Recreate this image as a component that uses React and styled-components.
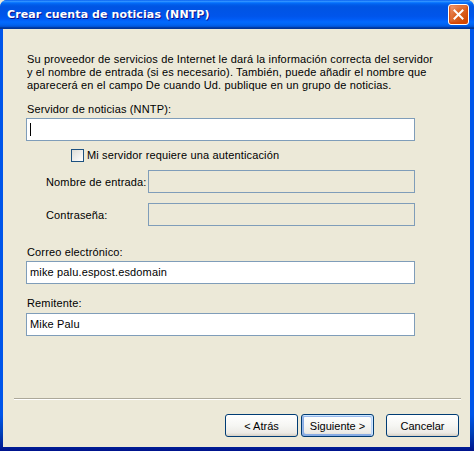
import styled, { createGlobalStyle } from "styled-components";

const GlobalStyle = createGlobalStyle`
  html, body {
    margin: 0;
    padding: 0;
    background: #ece9d8;
  }
  * {
    box-sizing: border-box;
  }
`;

export default () => {
  return (
    <>
      <GlobalStyle />
      <Window>
        <TitleBar>
          <Title>Crear cuenta de noticias (NNTP)</Title>
          <CloseBtn aria-label="Cerrar">
            <svg width="11" height="11" viewBox="0 0 11 11">
              <path
                d="M1.5 1.5 L9.5 9.5 M9.5 1.5 L1.5 9.5"
                stroke="#fff"
                strokeWidth="2"
                strokeLinecap="square"
              />
            </svg>
          </CloseBtn>
        </TitleBar>
        <Client>
          <Intro>
            Su proveedor de servicios de Internet le dará la información correcta del servidor
            <br />
            y el nombre de entrada (si es necesario). También, puede añadir el nombre que
            <br />
            aparecerá en el campo De cuando Ud. publique en un grupo de noticias.
          </Intro>

          <Label $top={11}>Servidor de noticias (NNTP):</Label>
          <Field $top={2}>
            <Caret />
          </Field>

          <CheckRow>
            <CheckBox />
            <span>Mi servidor requiere una autenticación</span>
          </CheckRow>

          <SubRow $top={8}>
            <SubLabel>Nombre de entrada:</SubLabel>
            <Field $disabled $width={267} />
          </SubRow>
          <SubRow $top={10}>
            <SubLabel>Contraseña:</SubLabel>
            <Field $disabled $width={267} />
          </SubRow>

          <Label $top={20}>Correo electrónico:</Label>
          <Field $top={2}>mike palu.espost.esdomain</Field>

          <Label $top={13}>Remitente:</Label>
          <Field $top={3}>Mike Palu</Field>

          <Separator />

          <Buttons>
            <Button>&lt; Atrás</Button>
            <Button $default>Siguiente &gt;</Button>
            <Button $gap>Cancelar</Button>
          </Buttons>
        </Client>
      </Window>
    </>
  );
};

const Window = styled.div`
  width: 474px;
  height: 451px;
  display: flex;
  flex-direction: column;
  background: linear-gradient(to bottom, #0055ea 0%, #0055ea 92%, #0040b8 96%, #00138c 100%);
  border-radius: 7px 7px 0 0;
  overflow: hidden;
  padding: 0 4px 4px 3px;
  font-family: Tahoma, "Liberation Sans", Arial, sans-serif;
  font-size: 11px;
  letter-spacing: 0.15px;
  color: #000;
`;

const TitleBar = styled.div`
  height: 29px;
  margin: 0 -4px 0 -3px;
  padding: 0 5px 0 7px;
  display: flex;
  align-items: center;
  justify-content: space-between;
  background: linear-gradient(
    to bottom,
    #0058ee 0%,
    #3593ff 4%,
    #288eff 6%,
    #127dff 8%,
    #036ffc 10%,
    #0262ee 14%,
    #0057e5 20%,
    #0054e3 24%,
    #0055eb 56%,
    #005bf5 66%,
    #026afe 76%,
    #0062ef 86%,
    #0052d6 92%,
    #0040ab 94%,
    #003092 100%
  );
`;

const Title = styled.div`
  color: #fff;
  font-family: "Trebuchet MS", "DejaVu Sans", sans-serif;
  font-weight: bold;
  font-size: 11px;
  text-shadow: 1px 1px #0f1089;
  letter-spacing: 0.1px;
`;

const CloseBtn = styled.div`
  width: 21px;
  height: 21px;
  border: 1px solid #fff;
  border-radius: 3px;
  display: flex;
  align-items: center;
  justify-content: center;
  background: radial-gradient(circle at 90% 90%, #cc4600 0%, #dc6527 55%, #f3a98b 100%);
  box-shadow: inset 0 -1px 2px 1px #da4600;
`;

const Client = styled.div`
  flex: 1;
  background: #ece9d8;
  padding: 24px 11px 0 23px;
  display: flex;
  flex-direction: column;
`;

const Intro = styled.p`
  margin: 0 0 0 1px;
  line-height: 13px;
  white-space: nowrap;
`;

const Label = styled.div`
  margin-top: ${(p) => p.$top || 0}px;
  padding-left: 1px;
  line-height: 13px;
`;

const Field = styled.div`
  margin-top: ${(p) => p.$top || 0}px;
  width: ${(p) => p.$width || 389}px;
  height: 23px;
  border: 1px solid #7f9db9;
  background: ${(p) => (p.$disabled ? "#ece9d8" : "#fff")};
  display: flex;
  align-items: center;
  padding-left: 3px;
  line-height: 13px;
`;

const Caret = styled.span`
  display: block;
  width: 1px;
  height: 13px;
  background: #000;
  margin-left: 0;
`;

const CheckRow = styled.label`
  margin: 8px 0 0 45px;
  display: flex;
  align-items: center;
  gap: 3px;
  line-height: 13px;
`;

const CheckBox = styled.span`
  width: 13px;
  height: 13px;
  border: 1px solid #1c5180;
  background: linear-gradient(135deg, #dcdcd7 0%, #ffffff 100%);
`;

const SubRow = styled.div`
  margin-top: ${(p) => p.$top}px;
  display: flex;
  align-items: center;
`;

const SubLabel = styled.span`
  width: 122px;
  padding-left: 20px;
`;

const Separator = styled.div`
  margin: 62px 0 0 -12px;
  width: 447px;
  height: 2px;
  border-top: 1px solid #aca899;
  border-bottom: 1px solid #fff;
`;

const Buttons = styled.div`
  margin-top: 14px;
  display: flex;
  justify-content: flex-end;
  gap: 3px;
`;

const Button = styled.button`
  width: 73px;
  height: 23px;
  margin-left: ${(p) => (p.$gap ? "9px" : "0")};
  font: inherit;
  color: #000;
  border: 1px solid #003c74;
  border-radius: 3px;
  background: linear-gradient(to bottom, #ffffff 0%, #f6f6f3 50%, #ecebe6 85%, #d6d0c5 100%);
  box-shadow: ${(p) =>
    p.$default
      ? "inset -1px 1px #cee7ff, inset 1px 2px #98b8ea, inset -2px 2px #bcd4f6, inset 1px -1px #89ade4, inset 2px -2px #89ade4"
      : "none"};
  padding: 0;
`;
